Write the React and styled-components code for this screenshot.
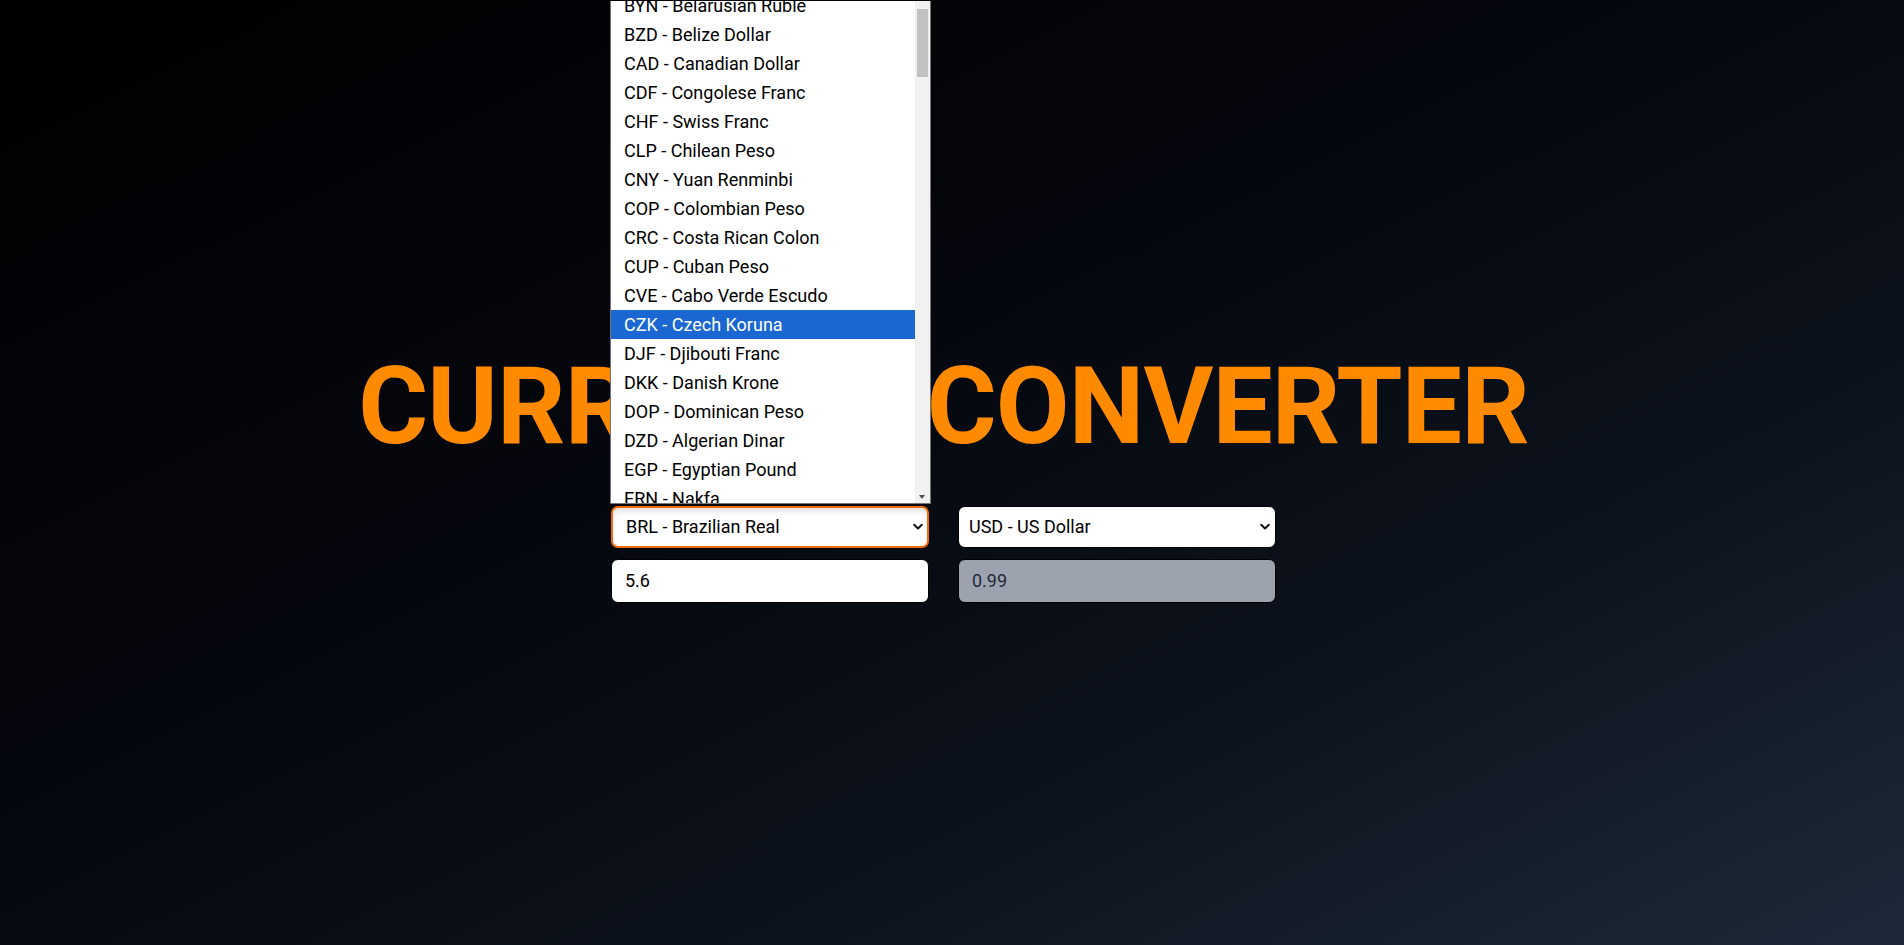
import React from "react";
import styled, { createGlobalStyle } from "styled-components";

const GlobalStyle = createGlobalStyle`
  html, body { margin: 0; padding: 0; }
  body {
    font-family: Roboto, "Noto Sans", "Liberation Sans", sans-serif;
    background: #000;
  }
  * { box-sizing: border-box; }
`;

const Page = styled.main`
  min-height: 100vh;
  display: flex;
  flex-direction: column;
  align-items: center;
  justify-content: center;
  padding-right: 17px;
  background: linear-gradient(to bottom right, #000000 0%, #05080f 45%, #0d131d 70%, #1d2939 100%);
  overflow: hidden;
`;

const Title = styled.h1`
  margin: 0 0 35px;
  font-family: Roboto, "Liberation Sans", sans-serif;
  font-weight: 700;
  font-size: 107px;
  line-height: 128px;
  letter-spacing: -0.85px;
  color: #ff8a00;
  text-transform: uppercase;
  white-space: nowrap;
`;

const Grid = styled.div`
  display: grid;
  grid-template-columns: 318px 318px;
  column-gap: 29px;
  row-gap: 11px;
`;

const SelectWrap = styled.div`
  position: relative;
  height: 42px;
`;

const Select = styled.select`
  appearance: none;
  -webkit-appearance: none;
  width: 100%;
  height: 100%;
  border-radius: 7px;
  border: ${(p) => (p.$focused ? "2px solid #f26c0d" : "1px solid #000")};
  padding: 0 30px 0 ${(p) => (p.$focused ? "13px" : "10px")};
  background: #fff;
  color: #000;
  font-family: Roboto, "Liberation Sans", sans-serif;
  font-size: 18px;
  outline: none;
  box-shadow: ${(p) => (p.$focused ? "inset 0 5px 8px -4px rgba(0,0,0,0.18)" : "none")};
`;

const Chevron = styled.svg`
  position: absolute;
  right: 6px;
  top: 50%;
  transform: translateY(-50%);
  width: 10px;
  height: 7px;
  pointer-events: none;
`;

const Field = styled.input`
  width: 100%;
  height: 44px;
  border-radius: 7px;
  border: 1px solid #000;
  padding: 0 13px;
  font-family: Roboto, "Liberation Sans", sans-serif;
  font-size: 18px;
  color: ${(p) => (p.$readOnlyLook ? "#1f2937" : "#000")};
  background: ${(p) => (p.$readOnlyLook ? "#9ca3af" : "#fff")};
  outline: none;
`;

const Popup = styled.div`
  position: absolute;
  left: -1px;
  bottom: calc(100% + 2px);
  width: 321px;
  height: 503px;
  background: #fff;
  border: 1px solid #767676;
  border-top: none;
  overflow: hidden;
  display: flex;
  z-index: 10;
`;

const OptionList = styled.ul`
  list-style: none;
  margin: -10px 0 0;
  padding: 0;
  flex: 1;
`;

const OptionRow = styled.li`
  height: 29px;
  line-height: 29px;
  padding-left: 13px;
  font-family: Roboto, "Liberation Sans", sans-serif;
  font-size: 18px;
  white-space: nowrap;
  color: ${(p) => (p.$active ? "#fff" : "#000")};
  background: ${(p) => (p.$active ? "#1a67d2" : "transparent")};
`;

const Track = styled.div`
  position: relative;
  width: 15px;
  flex: none;
  background: #f1f1f1;
`;

const Thumb = styled.div`
  position: absolute;
  left: 2px;
  top: 8px;
  width: 11px;
  height: 68px;
  background: #c1c1c1;
`;

const DownArrow = styled.div`
  position: absolute;
  left: 4px;
  bottom: 4px;
  width: 0;
  height: 0;
  border-left: 3.5px solid transparent;
  border-right: 3.5px solid transparent;
  border-top: 4px solid #505050;
`;

const popupItems = [
  "BYN - Belarusian Ruble",
  "BZD - Belize Dollar",
  "CAD - Canadian Dollar",
  "CDF - Congolese Franc",
  "CHF - Swiss Franc",
  "CLP - Chilean Peso",
  "CNY - Yuan Renminbi",
  "COP - Colombian Peso",
  "CRC - Costa Rican Colon",
  "CUP - Cuban Peso",
  "CVE - Cabo Verde Escudo",
  "CZK - Czech Koruna",
  "DJF - Djibouti Franc",
  "DKK - Danish Krone",
  "DOP - Dominican Peso",
  "DZD - Algerian Dinar",
  "EGP - Egyptian Pound",
  "ERN - Nakfa",
];

const currencies = [
  "BRL - Brazilian Real",
  "USD - US Dollar",
  ...popupItems,
];

const ChevronIcon = () => (
  <Chevron viewBox="0 0 10 7">
    <path d="M1.2 1.3 L5 5 L8.8 1.3" fill="none" stroke="#111" strokeWidth="2" strokeLinecap="round" strokeLinejoin="round" />
  </Chevron>
);

export default function App() {
  return (
    <>
      <GlobalStyle />
      <Page>
        <Title>Currency Converter</Title>
        <Grid>
          <SelectWrap>
            <Select $focused defaultValue="BRL - Brazilian Real">
              {currencies.map((c) => (
                <option key={c} value={c}>{c}</option>
              ))}
            </Select>
            <ChevronIcon />
            <Popup>
              <OptionList>
                {popupItems.map((c) => (
                  <OptionRow key={c} $active={c.startsWith("CZK")}>{c}</OptionRow>
                ))}
              </OptionList>
              <Track>
                <Thumb />
                <DownArrow />
              </Track>
            </Popup>
          </SelectWrap>
          <SelectWrap>
            <Select defaultValue="USD - US Dollar">
              {currencies.map((c) => (
                <option key={c} value={c}>{c}</option>
              ))}
            </Select>
            <ChevronIcon />
          </SelectWrap>
          <Field defaultValue="5.6" />
          <Field $readOnlyLook readOnly value="0.99" />
        </Grid>
      </Page>
    </>
  );
}
